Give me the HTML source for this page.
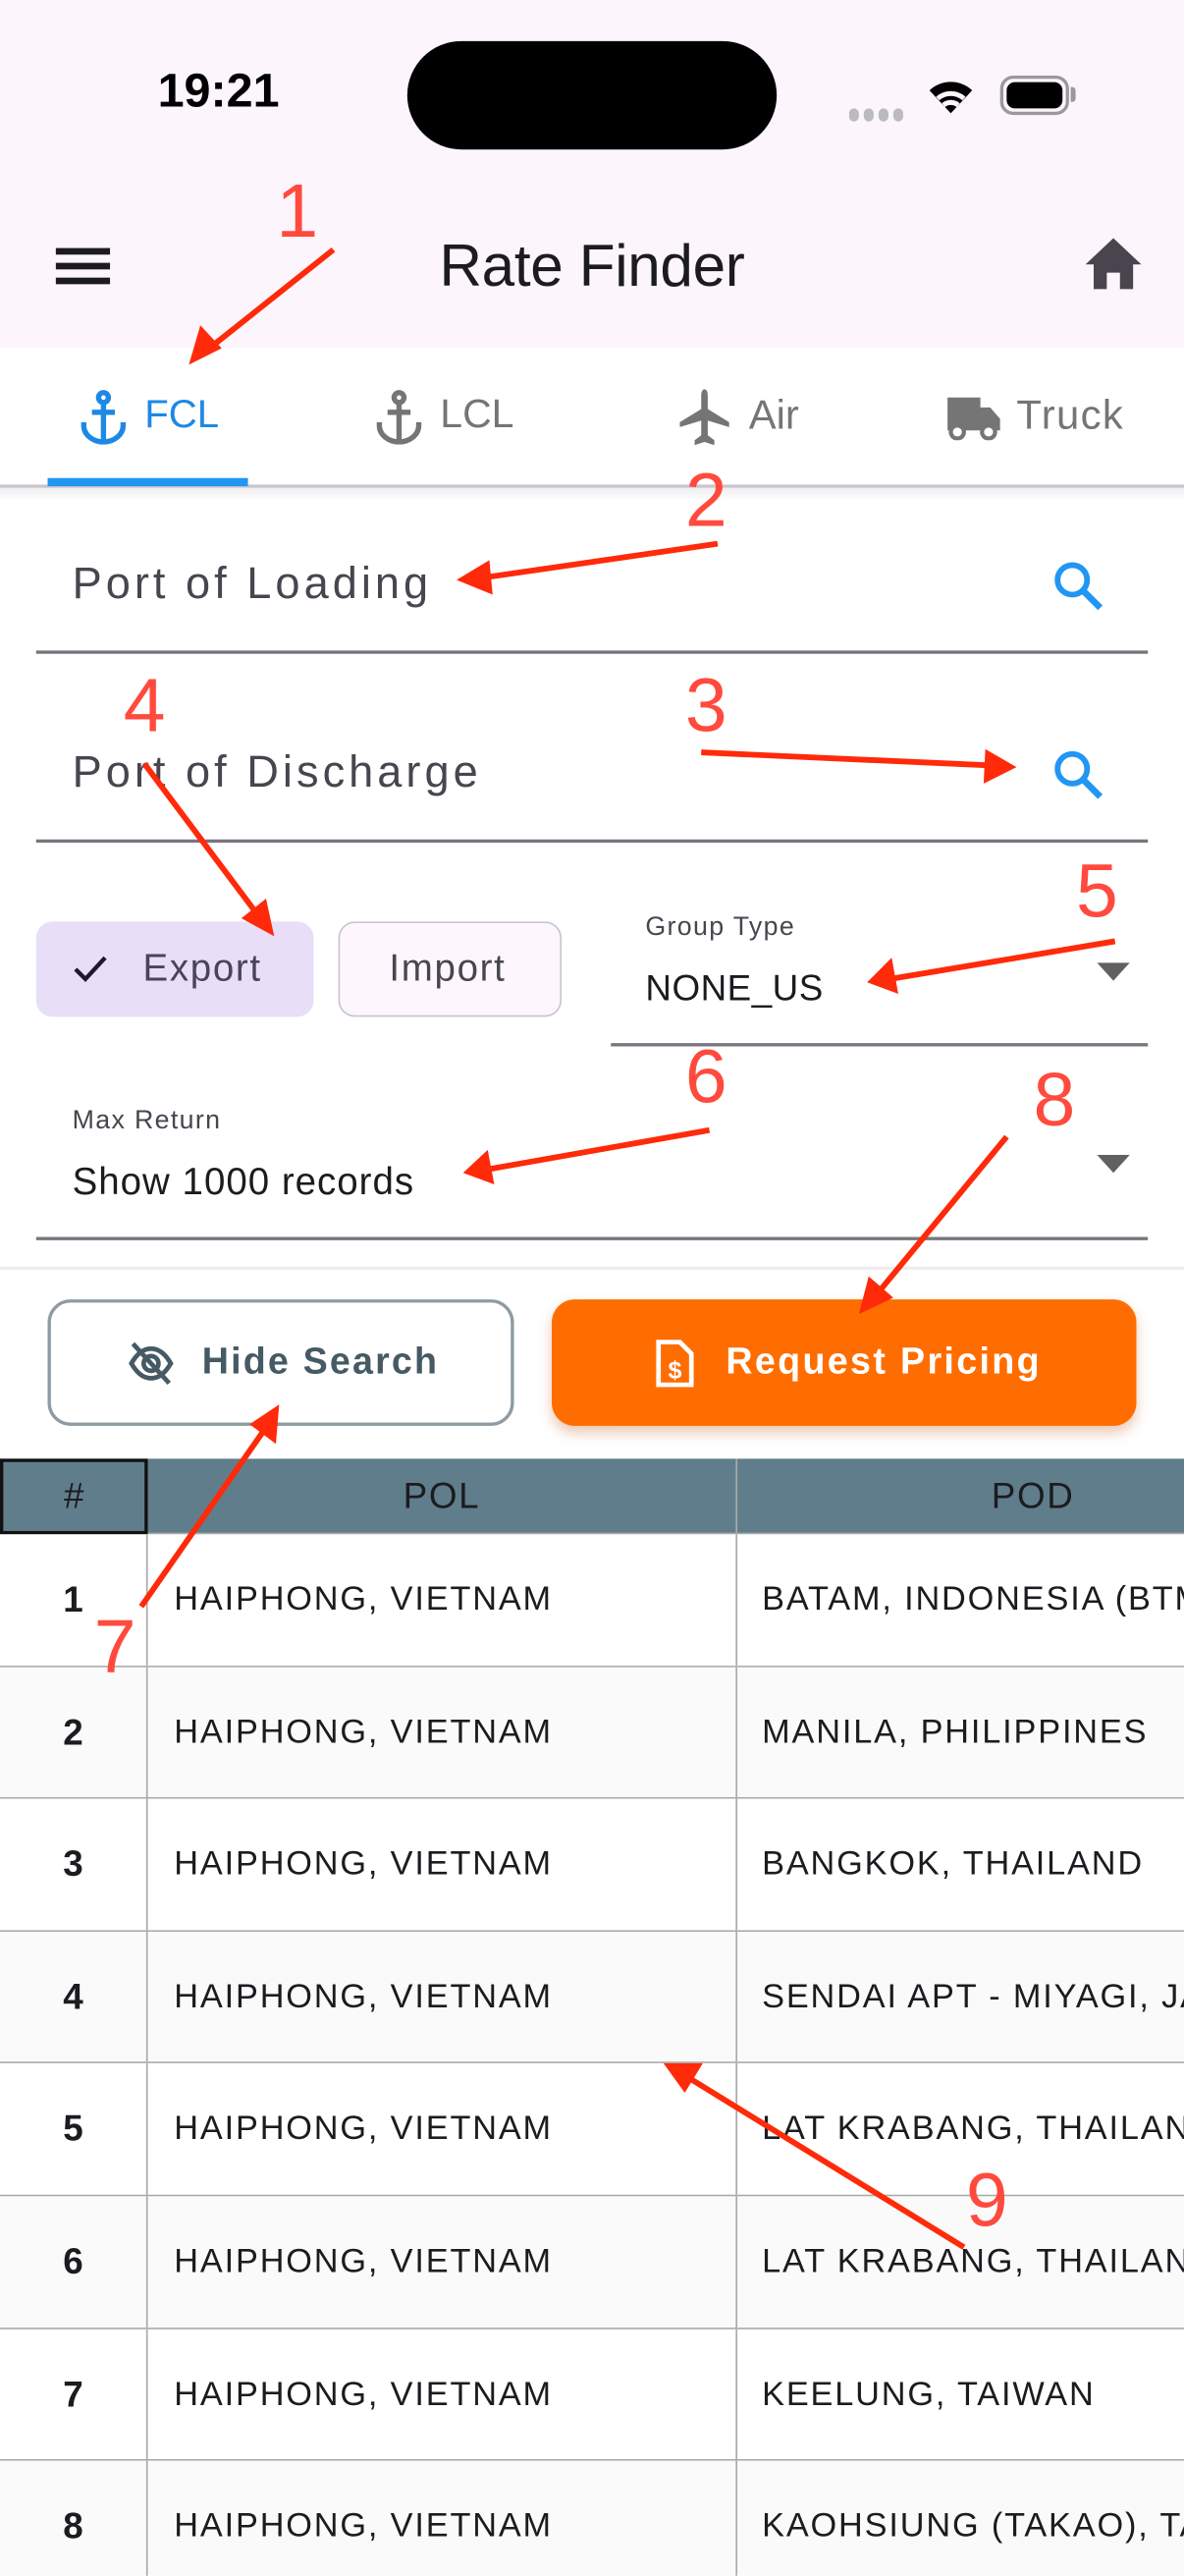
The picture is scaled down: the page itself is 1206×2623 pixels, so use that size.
<!DOCTYPE html>
<html><head><meta charset="utf-8">
<style>
html,body{margin:0;padding:0;background:#fff;overflow:hidden;}
body{width:1206px;height:2622px;}
#root{position:absolute;left:0;top:0;width:721px;height:1568px;transform:scale(1.67268);transform-origin:0 0;font-family:"Liberation Sans",sans-serif;overflow:hidden;background:#fff;}
.a{position:absolute;}
.t{position:absolute;white-space:nowrap;}
.row{position:absolute;left:0;width:721px;height:80.6px;border-bottom:1.5px solid #aaa;box-sizing:border-box;}
.row .n{position:absolute;left:0;width:89px;top:0;bottom:0;border-right:1.5px solid #aaa;text-align:center;font-weight:bold;font-size:22px;line-height:80px;color:#1c1b1f;}
.row .p{position:absolute;left:106px;top:0;line-height:80px;font-size:20.5px;letter-spacing:1.1px;color:#1c1b1f;}
.row .d{position:absolute;left:448px;top:0;bottom:0;border-left:1.5px solid #aaa;padding-left:15px;line-height:80px;font-size:20.5px;letter-spacing:1.1px;color:#1c1b1f;white-space:nowrap;}
</style></head><body><div id="root">
<div class="a" style="left:0;top:0;width:721px;height:212px;background:#fdf5fc;"></div>
<div class="t" style="left:96px;top:40px;font-size:29px;font-weight:bold;color:#000;letter-spacing:0px;">19:21</div>
<div class="a" style="left:248px;top:25px;width:225px;height:66px;border-radius:33px;background:#000;"></div>
<div class="a" style="left:517px;top:62px;"><svg width="36" height="10"><g fill="#bbb"><rect x="0" y="1" width="6" height="8" rx="3"/><rect x="9" y="1" width="6" height="8" rx="3"/><rect x="18" y="1" width="6" height="8" rx="3"/><rect x="27" y="1" width="6" height="8" rx="3"/></g></svg></div>
<div class="a" style="left:563px;top:45px;"><svg width="32" height="26" viewBox="0 0 32 26"><path d="M16 24 L3 10 A19 19 0 0 1 29 10 Z" fill="#000"/><path d="M8 15 A12 12 0 0 1 24 15" stroke="#fdf5fc" stroke-width="3" fill="none"/><path d="M11.5 19 A7 7 0 0 1 20.5 19" stroke="#fdf5fc" stroke-width="3" fill="none"/></svg></div>
<div class="a" style="left:609px;top:46px;width:42px;height:24px;border:2px solid #999;border-radius:8px;box-sizing:border-box;"></div>
<div class="a" style="left:613px;top:50px;width:34px;height:16px;background:#000;border-radius:5px;"></div>
<div class="a" style="left:652px;top:53px;width:3px;height:9px;background:#999;border-radius:0 2px 2px 0;"></div>
<div class="a" style="left:34px;top:151px;width:33px;height:3.5px;background:#1c1b1f;"></div>
<div class="a" style="left:34px;top:160px;width:33px;height:3.5px;background:#1c1b1f;"></div>
<div class="a" style="left:34px;top:169px;width:33px;height:3.5px;background:#1c1b1f;"></div>
<div class="t" style="left:0;width:721px;text-align:center;top:141px;font-size:36px;color:#1c1b1f;letter-spacing:-0.2px;">Rate Finder</div>
<div class="a" style="left:660px;top:143px;"><svg width="36" height="34" viewBox="0 0 36 34"><path d="M18 2 L35 18 L30 18 L30 33 L22 33 L22 23 L14 23 L14 33 L6 33 L6 18 L1 18 Z" fill="#48454e"/></svg></div>
<div class="a" style="left:0;top:212px;width:721px;height:84px;background:#fff;"></div>
<div class="a" style="left:0;top:295px;width:721px;height:2px;background:#cac4d0;"></div>
<div class="a" style="left:0;top:297px;width:721px;height:8px;background:linear-gradient(#eee,#fff);"></div>
<div class="a" style="left:29px;top:291px;width:122px;height:5px;background:#2196f3;"></div>
<svg class="a" style="left:48px;top:237px" width="30" height="34" viewBox="0 0 30 34"><g fill="none" stroke="#1e88e5" stroke-width="3.2"><circle cx="15" cy="5" r="3"/><path d="M15 8 V31"/><path d="M8 14 H22"/><path d="M3 20 V22 A12 10 0 0 0 27 22 V20"/></g></svg>
<div class="t" style="left:88px;top:239px;font-size:24px;color:#1e88e5;">FCL</div>
<svg class="a" style="left:228px;top:237px" width="30" height="34" viewBox="0 0 30 34"><g fill="none" stroke="#757575" stroke-width="3.2"><circle cx="15" cy="5" r="3"/><path d="M15 8 V31"/><path d="M8 14 H22"/><path d="M3 20 V22 A12 10 0 0 0 27 22 V20"/></g></svg>
<div class="t" style="left:268px;top:239px;font-size:24.5px;color:#757575;">LCL</div>
<svg class="a" style="left:413px;top:236px" width="32" height="36" viewBox="0 0 32 36"><path d="M16 1 C17.5 1 18 3 18 5 V13 L31 21 V24 L18 20 V29 L22 32 V35 L16 33 L10 35 V32 L14 29 V20 L1 24 V21 L14 13 V5 C14 3 14.5 1 16 1 Z" fill="#757575"/></svg>
<div class="t" style="left:456px;top:239px;font-size:25px;color:#757575;">Air</div>
<svg class="a" style="left:576px;top:240px" width="34" height="28" viewBox="0 0 34 28"><path d="M1 2 H21 V8 H27 L33 15 V22 H1 Z" fill="#757575"/><circle cx="7" cy="23" r="4" fill="#fff" stroke="#757575" stroke-width="2.5"/><circle cx="26" cy="23" r="4" fill="#fff" stroke="#757575" stroke-width="2.5"/></svg>
<div class="t" style="left:619px;top:239px;font-size:25px;color:#757575;letter-spacing:0.8px;">Truck</div>
<div class="t" style="left:44px;top:340px;font-size:27px;color:#49454f;letter-spacing:2.4px;">Port of Loading</div>
<svg class="a" style="left:640px;top:340px" width="34" height="34" viewBox="0 0 34 34"><circle cx="13" cy="13" r="9" fill="none" stroke="#2196f3" stroke-width="3.5"/><path d="M19.5 19.5 L30 30" stroke="#2196f3" stroke-width="4"/></svg>
<div class="a" style="left:22px;top:396px;width:677px;height:2px;background:#79747e;"></div>
<div class="t" style="left:44px;top:455px;font-size:27px;color:#49454f;letter-spacing:2.4px;">Port of Discharge</div>
<svg class="a" style="left:640px;top:455px" width="34" height="34" viewBox="0 0 34 34"><circle cx="13" cy="13" r="9" fill="none" stroke="#2196f3" stroke-width="3.5"/><path d="M19.5 19.5 L30 30" stroke="#2196f3" stroke-width="4"/></svg>
<div class="a" style="left:22px;top:511px;width:677px;height:2px;background:#79747e;"></div>
<div class="a" style="left:22px;top:561px;width:169px;height:58px;background:#e8def8;border-radius:10px;"></div>
<svg class="a" style="left:44px;top:580px" width="22" height="20" viewBox="0 0 22 20"><path d="M2 10 L8 16 L20 3" fill="none" stroke="#1d192b" stroke-width="2.6"/></svg>
<div class="t" style="left:87px;top:576px;font-size:23px;color:#4a4458;letter-spacing:1px;">Export</div>
<div class="a" style="left:206px;top:561px;width:136px;height:58px;border:1.5px solid #cac4d0;background:#fdf7fd;border-radius:10px;box-sizing:border-box;"></div>
<div class="t" style="left:237px;top:576px;font-size:23px;color:#49454f;letter-spacing:1px;">Import</div>
<div class="t" style="left:393px;top:556px;font-size:16px;color:#49454f;letter-spacing:0.8px;">Group Type</div>
<div class="t" style="left:393px;top:589px;font-size:22px;color:#1c1b1f;letter-spacing:0.3px;">NONE_US</div>
<svg class="a" style="left:668px;top:586px" width="20" height="12"><path d="M0 0 H20 L10 11 Z" fill="#616161"/></svg>
<div class="a" style="left:372px;top:635px;width:327px;height:2px;background:#79747e;"></div>
<div class="t" style="left:44px;top:674px;font-size:16px;color:#49454f;letter-spacing:0.8px;">Max Return</div>
<div class="t" style="left:44px;top:706px;font-size:23px;color:#1c1b1f;letter-spacing:0.6px;">Show 1000 records</div>
<svg class="a" style="left:668px;top:703px" width="20" height="12"><path d="M0 0 H20 L10 11 Z" fill="#616161"/></svg>
<div class="a" style="left:22px;top:753px;width:677px;height:2px;background:#79747e;"></div>
<div class="a" style="left:0;top:771px;width:721px;height:2px;background:#eee;"></div>
<div class="a" style="left:29px;top:791px;width:284px;height:77px;border:2px solid #8e9ba3;border-radius:14px;box-sizing:border-box;"></div>
<svg class="a" style="left:77px;top:815px" width="30" height="30" viewBox="0 0 30 30"><g fill="none" stroke="#455a64" stroke-width="2.8"><path d="M3 15 C7 8 11 6 15 6 C19 6 23 8 27 15 C23 22 19 24 15 24 C11 24 7 22 3 15 Z"/><circle cx="15" cy="15" r="4.5"/><path d="M4 3 L26 27"/></g></svg>
<div class="t" style="left:123px;top:816px;font-size:22.5px;font-weight:bold;color:#455a64;letter-spacing:1.3px;">Hide Search</div>
<div class="a" style="left:336px;top:791px;width:356px;height:77px;background:#ff6d00;border-radius:14px;box-shadow:0 4px 8px rgba(200,100,40,0.35);"></div>
<svg class="a" style="left:398px;top:815px" width="26" height="30" viewBox="0 0 26 30"><path d="M3 2 H16 L23 9 V28 H3 Z" fill="none" stroke="#fff" stroke-width="2.8"/><text x="13" y="24" text-anchor="middle" font-family="Liberation Sans" font-weight="bold" font-size="15" fill="#fff">$</text></svg>
<div class="t" style="left:442px;top:816px;font-size:22.5px;font-weight:bold;color:#fff;letter-spacing:1.4px;">Request Pricing</div>
<div class="a" style="left:0;top:888px;width:721px;height:46px;background:#607d8b;border-bottom:1.5px solid #aaa;box-sizing:border-box;"></div>
<div class="a" style="left:0;top:888px;width:90px;height:46px;border:2px solid #111;box-sizing:border-box;text-align:center;font-size:22px;line-height:42px;color:#1c1b1f;">#</div>
<div class="a" style="left:90px;top:888px;width:358px;height:46px;text-align:center;font-size:22px;line-height:46px;color:#1c1b1f;letter-spacing:1px;">POL</div>
<div class="a" style="left:448px;top:888px;width:360px;height:46px;border-left:1.5px solid #aaa;text-align:center;font-size:22px;line-height:46px;color:#1c1b1f;letter-spacing:1px;">POD</div>
<div class="row" style="top:934px;background:#fff"><div class="n">1</div><div class="p">HAIPHONG, VIETNAM</div><div class="d">BATAM, INDONESIA (BTM)</div></div>
<div class="row" style="top:1014.6px;background:#fafafa"><div class="n">2</div><div class="p">HAIPHONG, VIETNAM</div><div class="d">MANILA, PHILIPPINES</div></div>
<div class="row" style="top:1095.2px;background:#fff"><div class="n">3</div><div class="p">HAIPHONG, VIETNAM</div><div class="d">BANGKOK, THAILAND</div></div>
<div class="row" style="top:1175.8px;background:#fafafa"><div class="n">4</div><div class="p">HAIPHONG, VIETNAM</div><div class="d">SENDAI APT - MIYAGI, JAPAN</div></div>
<div class="row" style="top:1256.4px;background:#fff"><div class="n">5</div><div class="p">HAIPHONG, VIETNAM</div><div class="d">LAT KRABANG, THAILAND</div></div>
<div class="row" style="top:1337px;background:#fafafa"><div class="n">6</div><div class="p">HAIPHONG, VIETNAM</div><div class="d">LAT KRABANG, THAILAND</div></div>
<div class="row" style="top:1417.6px;background:#fff"><div class="n">7</div><div class="p">HAIPHONG, VIETNAM</div><div class="d">KEELUNG, TAIWAN</div></div>
<div class="row" style="top:1498.2px;background:#fafafa"><div class="n">8</div><div class="p">HAIPHONG, VIETNAM</div><div class="d">KAOHSIUNG (TAKAO), TAIWAN</div></div>
<svg class="a" style="left:0;top:0" width="721" height="1568" viewBox="0 0 721 1568">
<g stroke="#ff2a0a" stroke-width="3.5" fill="none">
<path d="M203 152 L125 214"/><path d="M437 331 L292 352"/><path d="M427 458 L604 466"/><path d="M88 465 L160 561"/><path d="M679 573 L542 596"/><path d="M432 688 L296 712"/><path d="M86 978 L164 866"/><path d="M613 692 L533 789"/><path d="M587 1368 L418 1264"/>
</g>
<g fill="#ff2a0a">
<path d="M115 222 L122 198 L135 212 Z"/>
<path d="M278 353 L298 341 L300 362 Z"/>
<path d="M619 467 L600 456 L599 477 Z"/>
<path d="M167 570 L147 559 L162 547 Z"/>
<path d="M528 598 L543 583 L547 605 Z"/>
<path d="M282 714 L297 700 L301 721 Z"/>
<path d="M170 855 L168 879 L152 867 Z"/>
<path d="M523 800 L529 777 L544 790 Z"/>
<path d="M404 1256 L428 1256 L417 1274 Z"/>
</g>
<g font-family="Liberation Sans" font-size="46" fill="#ff4a3d" text-anchor="middle">
<text x="181" y="144">1</text><text x="430" y="320">2</text><text x="430" y="445">3</text><text x="88" y="445">4</text><text x="668" y="558">5</text><text x="430" y="671">6</text><text x="70" y="1018">7</text><text x="642" y="685">8</text><text x="601" y="1355">9</text>
</g>
</svg>
</div></body></html>
